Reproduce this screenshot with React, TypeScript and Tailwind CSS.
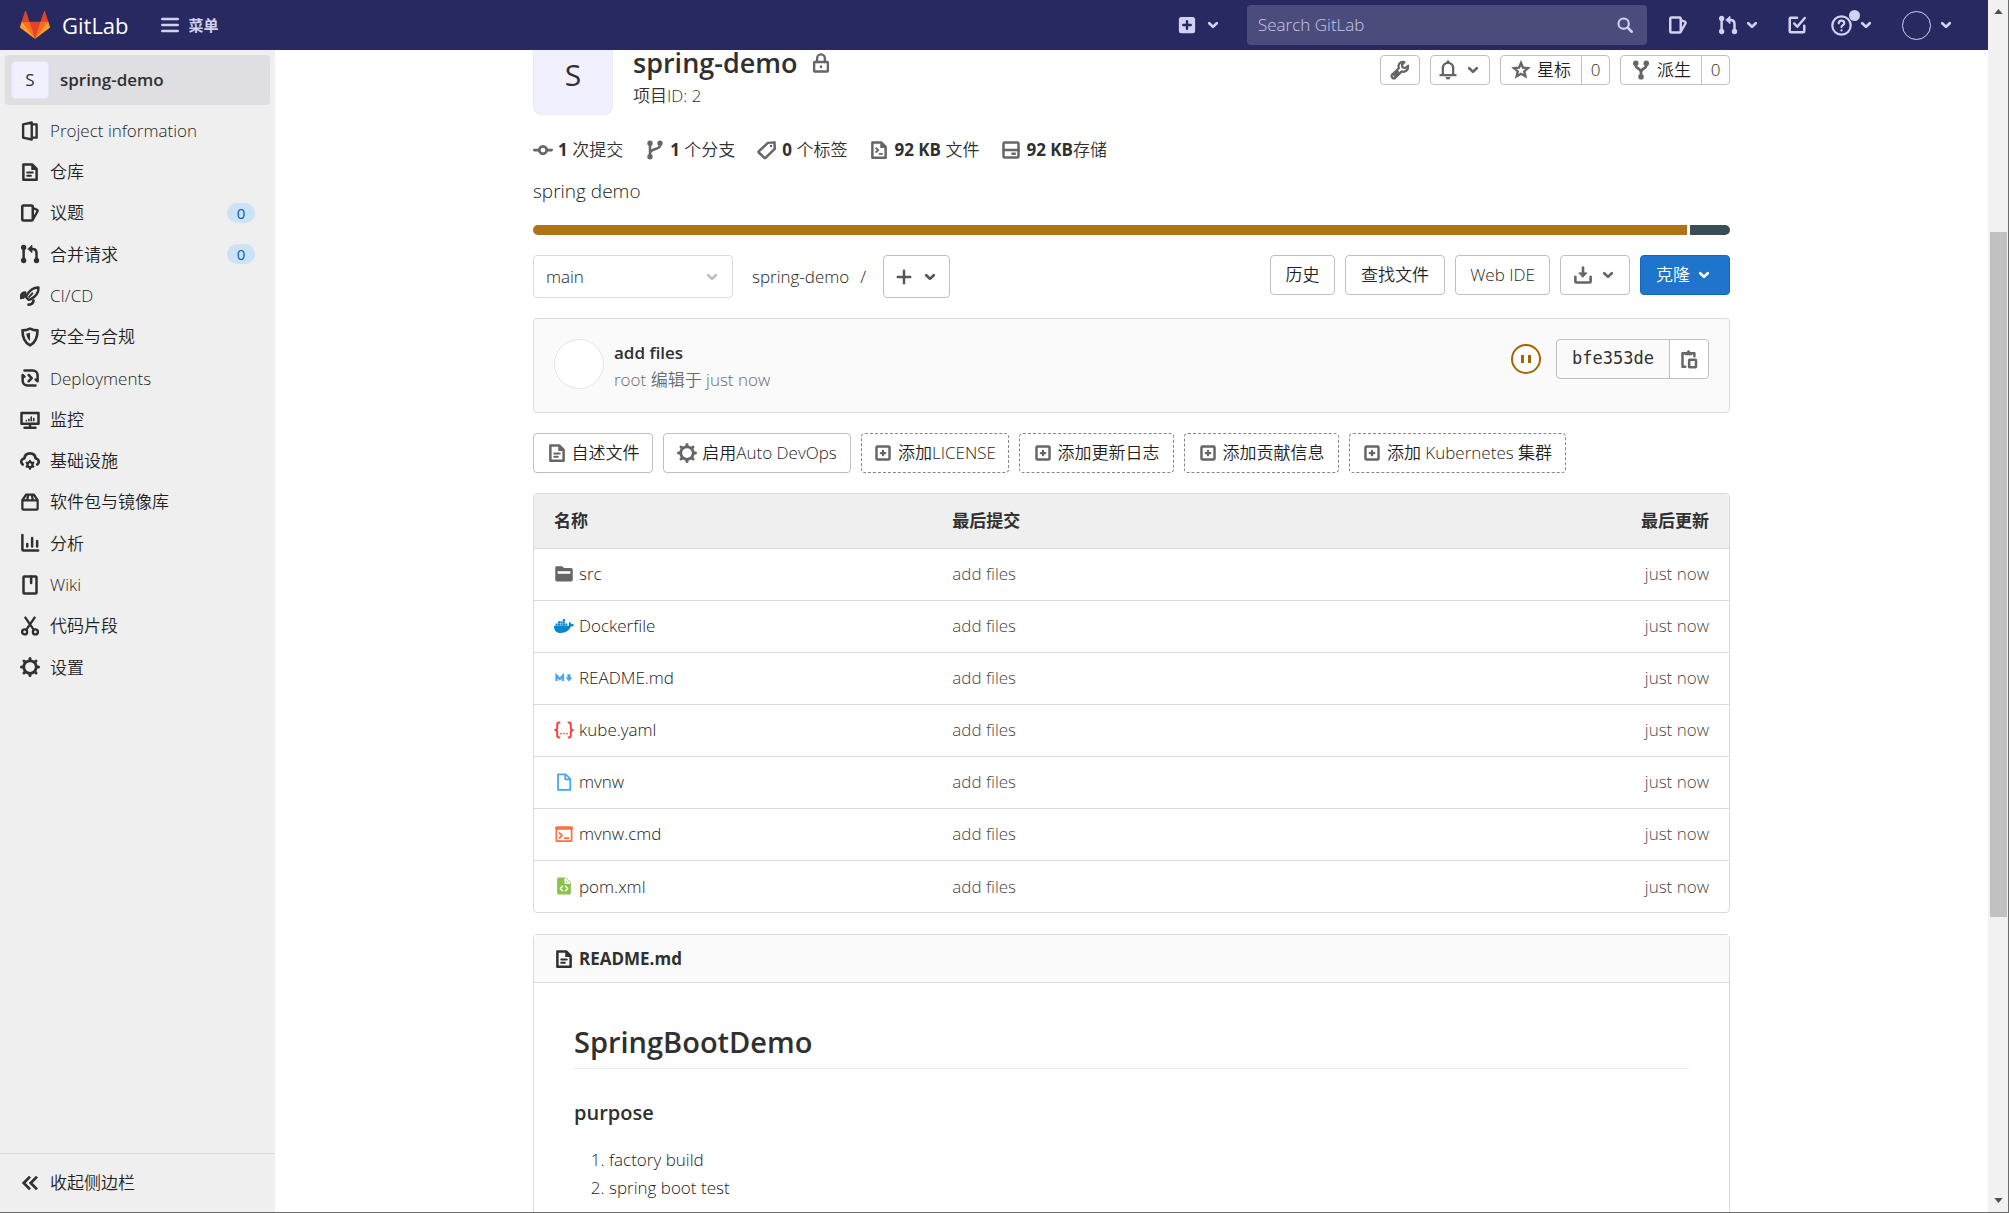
import React from "react";
import { FaDocker } from "react-icons/fa";

type IconProps = { className?: string };

function Svg({ className = "size-5", children }: IconProps & { children: React.ReactNode }) {
  return (
    <svg
      viewBox="0 0 16 16"
      className={`shrink-0 ${className}`}
      fill="none"
      stroke="currentColor"
      strokeWidth="1.9"
      strokeLinecap="round"
      strokeLinejoin="round"
      aria-hidden="true"
    >
      {children}
    </svg>
  );
}

const Chevron = ({ className = "size-5" }: IconProps) => (
  <Svg className={className}>
    <path d="M5 6.600 8 9.500l3-2.900" strokeWidth="2.200" />
  </Svg>
);
const Info = () => (
  <Svg>
    <path d="M2.500 2.700 9.400 1.200v13.600L2.500 13.300zM9.600 2.700h3.700v10.600H9.600" />
  </Svg>
);
const Doc = ({ className }: IconProps) => (
  <Svg className={className}>
    <path d="M2.700 1.900h7l3.600 3.600v8.600H2.700z" strokeWidth="2" />
    <path d="M9 1.600v4.700h4.700z" fill="currentColor" stroke="none" />
    <path d="M5.800 8.300h4.400M5.800 11h2.900" strokeWidth="1.600" />
  </Svg>
);
const Issues = ({ className }: IconProps) => (
  <Svg className={className}>
    <path d="M2.800 2h6.400c.6 0 1 .4 1 1v10c0 .6-.4 1-1 1H2.800c-.6 0-1-.4-1-1V3c0-.6.4-1 1-1z" strokeWidth="2" />
    <path d="m10.400 4 3.300 1.500c.4.200.6.600.4 1l-3.500 6.200" strokeWidth="1.800" />
  </Svg>
);
const Merge = ({ className }: IconProps) => (
  <Svg className={className}>
    <path d="M2.900 3v10M13.200 13V7.200c0-2-1.200-3.300-3.200-3.300H8.400" strokeWidth="2" />
    <path d="M6.400 3.800 9.600.9v5.800z" fill="currentColor" strokeWidth=".6" />
    <circle cx="2.900" cy="2.800" r="1.200" fill="currentColor" />
    <circle cx="2.900" cy="13.200" r="1.200" fill="currentColor" />
    <circle cx="13.200" cy="13.200" r="1.200" fill="currentColor" />
  </Svg>
);
const Rocket = () => (
  <Svg>
    <path d="M14.800 1.200c-4-.2-6.600 1.300-9.500 6.400l-.4 1.400 2.100 2.100 1.400-.4C13.500 8 15 5.300 14.800 1.200z" />
    <path d="m7.300 8.700 2.600-2.800" strokeWidth="1.600" />
    <path d="M4.200 5.300C1.900 5.500.700 7.200.800 9.600M10.800 11.600c-.2 2.200-1.900 3.200-3.900 3.300M2.600 9.200 4 7.200" strokeWidth="2.200" />
  </Svg>
);
const Shield = () => (
  <Svg>
    <path d="M8 1.300c2 1 4 1.400 6 1.400 0 5.700-1.500 9.600-6 12-4.500-2.400-6-6.300-6-12 2 0 4-.4 6-1.400z" strokeWidth="2.100" />
    <path d="M8 4.400v6.800C6.200 9.800 5.200 7.800 5 5.200 6 5.100 7.200 4.900 8 4.400z" fill="currentColor" stroke="none" />
  </Svg>
);
const Deploy = () => (
  <Svg>
    <path d="M3.600 2h6.500c2.400 0 4 1.600 4 4v4.200M12.400 14H6.100c-2.400 0-4-1.600-4-4V5.800M14.100 10.600l-1.600-1.400M2.100 5.600l1.500 1.300" strokeWidth="2" />
    <path d="m6.900 5.600 2.500 2.500-2.500 2.500" strokeWidth="2" />
  </Svg>
);
const Monitor = () => (
  <Svg>
    <path d="M1.200 2.400h13.600v8.600H1.200zM8 11.500v2.400M3.600 14.200h8.800" strokeWidth="2" />
    <path d="M5.100 8.400v.2M7.100 7.400v1.200M9 5.600v3M11 6.800v1.800" strokeWidth="1.300" />
  </Svg>
);
const CloudGear = () => (
  <Svg>
    <path d="M2.200 10.800C.1 9 1 6.200 3.500 6 3.800 3.400 5.600 1.900 8 1.900s4.200 1.500 4.500 4.100c2.500.2 3.400 3 1.300 4.800" strokeWidth="2.100" />
    <circle cx="8" cy="10.900" r="2" strokeWidth="1.900" />
    <path d="M8 7.700v.8M8 13.300v1M5.200 9.300l.7.400M10.100 12.100l.7.400M5.200 12.500l.7-.4M10.100 9.700l.7-.4" strokeWidth="1.600" />
  </Svg>
);
const Package = () => (
  <Svg>
    <path d="M1.900 6.700h12.200v6.600c0 .5-.3.800-.8.800H2.700c-.5 0-.8-.3-.8-.8zM1.900 6.500 5 2h6l3.100 4.500M6.600 2.200l-.8 4M9.400 2.200l.8 4" strokeWidth="1.800" />
  </Svg>
);
const ChartIcon = () => (
  <Svg>
    <path d="M1.900 1.500v11.600c0 .5.300.8.800.8h11.800M5.800 8.800v2M9.700 4v6.800M13.700 6.300v4.500" strokeWidth="2" />
  </Svg>
);
const Book = () => (
  <Svg>
    <path d="M3.400 1.200h9.200c.4 0 .6.200.6.600v12.400c0 .4-.2.600-.6.600H3.400c-.4 0-.6-.2-.6-.6V1.800c0-.4.200-.6.600-.6z" strokeWidth="2" />
    <path d="M8.900 1.400v5" strokeWidth="2" />
  </Svg>
);
const Scissors = () => (
  <Svg>
    <circle cx="3.700" cy="12.700" r="2" />
    <circle cx="12.300" cy="12.700" r="2" />
    <path d="m4.300 1.300 6.600 9.600M11.700 1.300 5.100 10.900" strokeWidth="1.900" />
  </Svg>
);
const Gear = ({ className }: IconProps) => (
  <Svg className={className}>
    <circle cx="8" cy="8" r="5" strokeWidth="2.200" />
    <path d="M8 1.200v1.200M8 13.600v1.200M1.200 8h1.200M13.600 8h1.200M3.200 3.200l.8.800M12 12l.8.800M12.800 3.200l-.8.800M4 12l-.8.800" strokeWidth="2.400" />
  </Svg>
);
const DoubleLeft = () => (
  <Svg>
    <path d="M8 2.900 3 8l5 5.100M13.600 2.900l-5 5.100 5 5.100" strokeWidth="2.200" strokeLinecap="butt" strokeLinejoin="miter" />
  </Svg>
);
const PlusSquare = ({ className }: IconProps) => (
  <Svg className={className}>
    <rect x="2.200" y="2.200" width="11.600" height="11.600" rx="1" strokeWidth="2.200" />
    <path d="M8 6v4M6 8h4" strokeWidth="2" />
  </Svg>
);
const Lock = () => (
  <Svg className="size-5 text-[#666]">
    <rect x="2.500" y="7.200" width="11" height="7.600" rx=".4" />
    <path d="M4.900 7.200V4.300c0-1.800 1.300-3.200 3.100-3.200s3.100 1.400 3.100 3.200v2.900" />
    <path d="M8 10.800v.400" strokeWidth="1.900" />
  </Svg>
);
const Wrench = () => (
  <Svg>
    <path d="M14.400 4.600 12.300 6.400l-2.300-.5-.4-2.200 1.900-2C9.300 1 7.300 2.200 6.900 4.200c-.2.900 0 1.700.2 2.400l-5.300 5c-.7.700-.7 1.800 0 2.500s1.800.7 2.500 0l5.100-5c2.700 1.100 5.600-1.100 5-4.500zM3.600 12.300l2.800-2.800" strokeWidth="1.800" />
  </Svg>
);
const Bell = () => (
  <Svg>
    <path d="M3.900 11.600V6.400c0-2.500 1.700-4.100 4.100-4.100s4.100 1.600 4.100 4.100v5.200M2 12.100h12" strokeWidth="1.900" />
    <path d="M8 1.200v.6" strokeWidth="2.200" />
    <path d="M6 13.600h4c0 1.100-.8 2-2 2s-2-.9-2-2z" fill="currentColor" stroke="none" />
  </Svg>
);
const Star = () => (
  <Svg>
    <path d="m8 2.400 1.600 3.700 4 .4-3 2.600.9 3.900L8 11l-3.500 2 .9-3.900-3-2.600 4-.4z" strokeWidth="1.900" strokeLinejoin="miter" />
  </Svg>
);
const Fork = () => (
  <Svg>
    <path d="M3.800 3v1.500C3.800 6.800 8 6.900 8 9.500V13M12.200 3v1.500C12.200 6.800 8 6.900 8 9.500" strokeWidth="2.200" />
    <circle cx="3.800" cy="2.600" r="1.300" fill="currentColor" />
    <circle cx="12.200" cy="2.600" r="1.300" fill="currentColor" />
    <circle cx="8" cy="13.400" r="1.300" fill="currentColor" />
  </Svg>
);
const Commit = () => (
  <Svg>
    <circle cx="8" cy="8" r="3" strokeWidth="2.200" />
    <path d="M1.100 8h3.400M11.500 8h3.400" strokeWidth="2.200" />
  </Svg>
);
const Branch = () => (
  <Svg>
    <path d="M4 3v10M12 3v1.400c0 3.200-7.200 2.400-7.800 5.800" strokeWidth="2" />
    <circle cx="4" cy="2.600" r="1.200" fill="currentColor" />
    <circle cx="12" cy="2.600" r="1.200" fill="currentColor" />
    <circle cx="4" cy="13.400" r="1.200" fill="currentColor" />
  </Svg>
);
const Tag = () => (
  <Svg>
    <path d="M8.700 2.300 14 1.900l.2 5.200-7.200 7c-.4.400-.9.400-1.300 0L1.600 10.200c-.4-.4-.4-.9 0-1.300z" strokeWidth="2" />
    <circle cx="11.200" cy="4.800" r="1" fill="currentColor" stroke="none" />
  </Svg>
);
const DocCode = () => (
  <Svg>
    <path d="M2.700 1.900h7l3.600 3.600v8.600H2.700z" strokeWidth="2" />
    <path d="M9 1.600v4.700h4.700z" fill="currentColor" stroke="none" />
    <path d="m5.700 6.600 1.800 1.500-1.800 1.500M8.500 11.100h1.900" strokeWidth="1.500" />
  </Svg>
);
const Disk = () => (
  <Svg>
    <rect x="2" y="2" width="12" height="12" rx="1" strokeWidth="2" />
    <path d="M2 8h12M9.200 11h1.800" strokeWidth="2" />
  </Svg>
);
const Download = () => (
  <Svg>
    <path d="M1.900 9.500v3.700c0 .5.300.8.800.8h10.600c.5 0 .8-.3.800-.8V9.500M8 2v6" strokeWidth="2.100" />
    <path d="M4.900 6.300h6.200L8 9.700z" fill="currentColor" strokeWidth=".8" />
  </Svg>
);
const Paste = () => (
  <Svg>
    <path d="M5 14.100H2.800V3.300h9.500v2.500" strokeWidth="2" />
    <path d="M4.800 5V2.400h1.500c.2-1 .7-1.400 1.300-1.400s1.100.4 1.300 1.400h1.500V5z" fill="currentColor" stroke="none" />
    <rect x="8.100" y="8.500" width="5.500" height="6" rx=".4" strokeWidth="2" />
  </Svg>
);
const Search = () => (
  <Svg className="size-[18px]">
    <circle cx="6.800" cy="6.800" r="4.600" />
    <path d="m10.400 10.400 3.600 3.600" strokeWidth="2.200" />
  </Svg>
);
const Todo = () => (
  <Svg>
    <path d="M8 2.100H3c-.5 0-.8.300-.8.800v10c0 .5.300.8.800.8h10c.5 0 .8-.3.800-.8V8.500" strokeWidth="2" />
    <path d="m5.800 6.800 2.400 2.600 6-7" strokeWidth="2" />
  </Svg>
);
const Help = () => (
  <Svg className="size-[21px]">
    <circle cx="8" cy="8" r="7" strokeWidth="1.700" />
    <path d="M5.900 6.300c0-1.200.9-2 2.100-2s2.100.8 2.100 1.900c0 1.500-2.100 1.500-2.100 3M8 11.700v.1" strokeWidth="1.700" />
  </Svg>
);

const Tanuki = () => (
  <svg viewBox="0 0 36 36" className="size-[30px] shrink-0" aria-hidden="true">
    <path fill="#e24329" d="M2 14l9.380 9v-9l-4-12.280c-.205-.632-1.176-.632-1.380 0zM34 14l-9.380 9v-9l4-12.280c.205-.632 1.176-.632 1.380 0zM18 34.380 3 14h30z" />
    <path fill="#fc6d26" d="M18 34.380 11.380 14H2l4 11zM18 34.380 24.620 14H34l-4 11z" />
    <path fill="#fca326" d="M2 14 .1 20.160c-.18.565 0 1.200.5 1.560l17.420 12.660zM34 14l1.900 6.160c.18.565 0 1.200-.5 1.560L18 34.380z" />
  </svg>
);

const FolderIcon = () => (
  <Svg className="size-5 text-[#666]">
    <path d="M1 3.200C1 2.300 1.600 1.800 2.400 1.800h3.700c.5 0 .9.200 1.200.6l.6.800h5.700c.8 0 1.400.6 1.400 1.400v8c0 .8-.6 1.400-1.400 1.400H2.400c-.8 0-1.400-.6-1.400-1.400z" fill="currentColor" stroke="none" />
    <path d="M2.900 6.800h10.200" stroke="#fff" strokeWidth="2" strokeLinecap="butt" />
  </Svg>
);
const MarkdownIcon = () => (
  <Svg className="size-5 text-[#42a5f5]">
    <path d="M2 10.300V6l2.600 2.800L7.200 6v4.300" strokeWidth="1.800" strokeLinecap="butt" strokeLinejoin="miter" />
    <path d="M12 5v3" strokeWidth="2.400" strokeLinecap="butt" />
    <path d="M9.200 7.600h5.600L12 10.800z" fill="currentColor" stroke="none" />
  </Svg>
);
const YamlIcon = () => (
  <Svg className="size-5 text-[#f44336]">
    <path d="M4.300 2H4C3 2 2.600 2.500 2.600 3.400v2.900c0 1-.5 1.500-1.600 1.700 1.100.2 1.600.7 1.600 1.700v2.900c0 .9.400 1.400 1.400 1.400h.3M11.700 2h.3c1 0 1.400.5 1.400 1.400v2.900c0 1 .5 1.500 1.600 1.700-1.100.2-1.600.7-1.600 1.700v2.900c0 .9-.4 1.400-1.400 1.400h-.3" strokeWidth="1.600" />
    <path d="M5.600 10.800v.1M8 10.800v.1M10.400 10.800v.1" strokeWidth="1.300" />
  </Svg>
);
const FileIcon = () => (
  <Svg className="size-5 text-[#42a5f5]">
    <path d="M3.200 1.800h6.100l3.700 3.700v8.700H3.200zM9 2v3.800h3.800" strokeWidth="1.400" />
  </Svg>
);
const ConsoleIcon = () => (
  <Svg className="size-5 text-[#ff7043]">
    <path d="M1.900 2.400h12.200v11.200H1.900z" strokeWidth="1.400" />
    <path d="M1.900 3.500h12.200" strokeWidth="2.200" />
    <path d="m4.300 7.200 2.200 2-2.200 2M8.500 11.300h3" strokeWidth="1.400" />
  </Svg>
);
const XmlIcon = () => (
  <Svg className="size-5 text-[#8bc34a]">
    <path d="M3.800 1.100h5.700l4 4v8.400c0 .8-.5 1.300-1.300 1.300H3.800c-.8 0-1.300-.5-1.300-1.300V2.400c0-.8.5-1.300 1.300-1.300z" fill="currentColor" stroke="none" />
    <path d="M9 2.200v3.500h3.500zM6.800 8.200 5.100 10l1.700 1.800M9.200 8.200l1.700 1.800-1.700 1.800" stroke="#fff" strokeWidth="1.200" />
  </Svg>
);

const nav: { label: string; icon: React.ReactNode; count?: number }[] = [
  { label: "Project information", icon: <Info /> },
  { label: "仓库", icon: <Doc /> },
  { label: "议题", icon: <Issues />, count: 0 },
  { label: "合并请求", icon: <Merge />, count: 0 },
  { label: "CI/CD", icon: <Rocket /> },
  { label: "安全与合规", icon: <Shield /> },
  { label: "Deployments", icon: <Deploy /> },
  { label: "监控", icon: <Monitor /> },
  { label: "基础设施", icon: <CloudGear /> },
  { label: "软件包与镜像库", icon: <Package /> },
  { label: "分析", icon: <ChartIcon /> },
  { label: "Wiki", icon: <Book /> },
  { label: "代码片段", icon: <Scissors /> },
  { label: "设置", icon: <Gear /> },
];

const files: { name: string; icon: React.ReactNode }[] = [
  { name: "src", icon: <FolderIcon /> },
  { name: "Dockerfile", icon: <FaDocker className="size-5 shrink-0 text-[#0288d1]" aria-hidden="true" /> },
  { name: "README.md", icon: <MarkdownIcon /> },
  { name: "kube.yaml", icon: <YamlIcon /> },
  { name: "mvnw", icon: <FileIcon /> },
  { name: "mvnw.cmd", icon: <ConsoleIcon /> },
  { name: "pom.xml", icon: <XmlIcon /> },
];

const stats: { icon: React.ReactNode; value: string; label: string }[] = [
  { icon: <Commit />, value: "1", label: " 次提交" },
  { icon: <Branch />, value: "1", label: " 个分支" },
  { icon: <Tag />, value: "0", label: " 个标签" },
  { icon: <DocCode />, value: "92 KB", label: " 文件" },
  { icon: <Disk />, value: "92 KB", label: "存储" },
];

const suggestions = [
  { label: "添加LICENSE", width: "w-[148px]" },
  { label: "添加更新日志", width: "w-[155px]" },
  { label: "添加贡献信息", width: "w-[155px]" },
  { label: "添加 Kubernetes 集群", width: "w-[217px]" },
];

function TopBar() {
  return (
    <header className="relative z-10 flex h-[50px] shrink-0 items-center bg-[#292961] pr-8 pl-5 text-[#d1d1f0]">
      <a href="#" className="flex items-center gap-3 text-[22px] font-medium text-white">
        <Tanuki />
        GitLab
      </a>
      <button className="ml-[30px] flex items-center gap-2 text-[15px] font-semibold">
        <Svg className="size-[22px]">
          <path d="M2.400 3.600h11.200M2.400 8h11.200M2.400 12.400h11.200" />
        </Svg>
        菜单
      </button>
      <div className="ml-auto flex items-center">
        <button className="flex items-center gap-[6px]" aria-label="新建">
          <Svg>
            <rect x="1.500" y="1.500" width="13" height="13" rx="2" fill="currentColor" stroke="none" />
            <path d="M8 5v6M5 8h6" stroke="#292961" strokeWidth="1.900" />
          </Svg>
          <Chevron />
        </button>
        <label className="ml-6 flex h-10 w-[400px] items-center rounded bg-[#4c4c7c] pr-[13px] pl-[11px]">
          <input type="search" aria-label="Search GitLab" placeholder="Search GitLab" className="min-w-0 flex-1 bg-transparent text-[17px] outline-none placeholder:text-[#c8c8e8]" />
          <Search />
        </label>
        <a href="#" aria-label="议题" className="ml-[21px]"><Issues /></a>
        <button className="ml-[30px] flex items-center gap-1" aria-label="合并请求"><Merge /><Chevron /></button>
        <a href="#" aria-label="待办事项" className="ml-[25px]"><Todo /></a>
        <button className="relative ml-6 flex items-center gap-1" aria-label="帮助">
          <Help />
          <Chevron />
          <span className="absolute -top-[5px] left-[18px] size-[11px] rounded-full bg-[#d1d1f0]" />
        </button>
        <button className="ml-[26px] flex items-center gap-[5px]" aria-label="用户">
          <span className="size-[29px] rounded-full border border-[#d1d1f0]" />
          <Chevron />
        </button>
      </div>
    </header>
  );
}

function Sidebar() {
  return (
    <aside className="flex w-[275px] shrink-0 flex-col bg-[#efefef] text-[17px] text-[#1f1f1f] [&_svg]:text-[#303030]">
      <a href="#" className="mx-[5px] mt-[5px] flex h-[50px] items-center gap-[11px] rounded bg-[#dfdee3] px-[6px] font-semibold text-[#303030]">
        <span className="flex size-[38px] items-center justify-center rounded border border-[#e4e4f4] bg-[#f0f0ff] font-normal">S</span>
        spring-demo
      </a>
      <ul className="mt-[5px] grid h-[578px] auto-rows-fr">
        {nav.map((n) => (
          <li key={n.label} className="flex">
            <a href="#" className="flex flex-1 items-center gap-[10px] px-5">
              {n.icon}
              {n.label}
              {n.count !== undefined && (
                <span className="ml-auto flex h-5 w-7 items-center justify-center rounded-full bg-[#cbe2f9] text-[15px] font-normal text-[#0b5cad]">{n.count}</span>
              )}
            </a>
          </li>
        ))}
      </ul>
      <button className="mt-auto flex h-[59px] items-center gap-[10px] border-t border-[#dbdbdb] px-5">
        <DoubleLeft />
        收起侧边栏
      </button>
    </aside>
  );
}

const outline = "flex items-center justify-center rounded border border-[#bfbfbf] bg-white";

function ProjectHeader() {
  return (
    <div className="flex items-start">
      <span className="flex size-20 shrink-0 items-center justify-center rounded-lg border border-[#ebebf5] bg-[#f0f0ff] text-[30px] leading-none font-normal">S</span>
      <div className="ml-5">
        <h1 className="mt-[10px] flex items-center gap-[13px] text-[27px] leading-9 font-semibold">
          spring-demo
          <Lock />
        </h1>
        <p className="text-[17px] leading-[30px] text-[#303030]">项目ID: 2</p>
      </div>
      <div className="mt-5 ml-auto flex items-center gap-[10px] text-[17px] text-[#1f1f1f] [&_svg]:text-[#666]">
        <button className={`${outline} h-[30px] w-10`} aria-label="设置"><Wrench /></button>
        <button className={`${outline} h-[30px] w-[60px] gap-[5px]`} aria-label="通知"><Bell /><Chevron /></button>
        <div className={`${outline} h-[30px]`}>
          <button className="flex h-full w-20 items-center justify-center gap-[6px]"><Star />星标</button>
          <a href="#" className="flex h-full w-[28px] items-center justify-center border-l border-[#bfbfbf]">0</a>
        </div>
        <div className={`${outline} h-[30px]`}>
          <button className="flex h-full w-20 items-center justify-center gap-[6px]"><Fork />派生</button>
          <a href="#" className="flex h-full w-[28px] items-center justify-center border-l border-[#bfbfbf]">0</a>
        </div>
      </div>
    </div>
  );
}

function Toolbar() {
  return (
    <div className="mt-5 flex items-start text-[17px] text-[#1f1f1f]">
      <div className="relative">
        <select aria-label="分支" className="h-[43px] w-[200px] appearance-none rounded border border-[#dbdbdb] bg-white px-3 text-[17px] text-[#222]">
          <option>main</option>
        </select>
        <span className="pointer-events-none absolute top-3 right-[11px] text-[#bfbfbf]"><Chevron /></span>
      </div>
      <nav className="ml-[19px] flex h-[43px] items-center text-[17px] text-[#222]">
        <a href="#">spring-demo</a>
        <span className="mx-[11px]">/</span>
      </nav>
      <button className={`${outline} ml-[6px] h-[43px] w-[67px] gap-[6px] text-[#555]`} aria-label="添加">
        <Svg><path d="M8 3v10M3 8h10" strokeWidth="2" /></Svg>
        <Chevron />
      </button>
      <div className="ml-auto flex gap-[10px]">
        <button className={`${outline} h-10 w-[65px]`}>历史</button>
        <button className={`${outline} h-10 w-[100px]`}>查找文件</button>
        <button className={`${outline} h-10 w-[95px]`}>Web IDE</button>
        <button className={`${outline} h-10 w-[70px] gap-[5px] text-[#666]`} aria-label="下载"><Download /><Chevron /></button>
        <button className="flex h-10 w-[90px] items-center justify-center gap-1 rounded border border-[#1068bf] bg-[#1f75cb] text-white">
          克隆
          <Chevron />
        </button>
      </div>
    </div>
  );
}

function LastCommit() {
  return (
    <section className="mt-5 flex h-[95px] items-start rounded border border-[#dbdbdb] bg-[#fafafa] p-5">
      <span className="size-[50px] rounded-full border border-[#e5e5e5] bg-white" />
      <div className="ml-[10px] text-[17px] leading-[27px]">
        <a href="#" className="block font-semibold">add files</a>
        <p className="text-[#6b6b6b]">root 编辑于 just now</p>
      </div>
      <div className="ml-auto flex items-center gap-[15px]">
        <a href="#" aria-label="流水线已暂停" className="flex size-[30px] items-center justify-center gap-1 rounded-full border-2 border-[#ab6100] bg-white">
          <span className="h-2 w-[3px] bg-[#ab6100]" />
          <span className="h-2 w-[3px] bg-[#ab6100]" />
        </a>
        <div className="flex h-10 rounded border border-[#bfbfbf]">
          <span className="flex w-[112px] items-center justify-center font-['DejaVu_Sans_Mono',monospace] text-[17px]">bfe353de</span>
          <button className="flex w-[39px] items-center justify-center rounded-r border-l border-[#bfbfbf] bg-white text-[#666]" aria-label="复制"><Paste /></button>
        </div>
      </div>
    </section>
  );
}

function FileTable() {
  return (
    <div className="mt-5 rounded border border-[#dbdbdb]">
      <table className="w-full table-fixed text-[17px]">
        <thead>
          <tr className="h-[54px] border-b border-[#dbdbdb] bg-[#efefef] text-left">
            <th className="w-1/3 px-5 font-bold">名称</th>
            <th className="px-5 font-bold">最后提交</th>
            <th className="w-1/5 px-5 text-right font-bold">最后更新</th>
          </tr>
        </thead>
        <tbody>
          {files.map((f) => (
            <tr key={f.name} className="h-[52px] border-b border-[#dbdbdb] text-[#484848] last:border-b-0">
              <td className="px-5">
                <a href="#" className="flex items-center gap-[5px] text-[#222]">{f.icon}{f.name}</a>
              </td>
              <td className="px-5"><a href="#">add files</a></td>
              <td className="px-5 text-right">just now</td>
            </tr>
          ))}
        </tbody>
      </table>
    </div>
  );
}

function Readme() {
  return (
    <article className="mt-[21px] h-[400px] rounded-t border border-[#dbdbdb]">
      <div className="flex h-12 items-center gap-[5px] border-b border-[#dbdbdb] bg-[#fafafa] px-5 text-[17px] font-bold">
        <Doc />
        README.md
      </div>
      <div className="p-10">
        <h2 className="border-b border-[#eaeaea] pb-[7px] text-[29px] leading-[38px] font-semibold">SpringBootDemo</h2>
        <h3 className="mt-[30px] text-[20px] leading-7 font-semibold">purpose</h3>
        <ol className="mt-[19px] list-decimal pl-[35px] text-[17px] leading-7 text-[#222]">
          <li>factory build</li>
          <li>spring boot test</li>
        </ol>
      </div>
    </article>
  );
}

function ScrollBar() {
  return (
    <div className="flex w-[21px] shrink-0 flex-col items-center border-r border-[#6b6b6b] bg-[#f1f1f1] py-[9px]" aria-hidden="true">
      <svg viewBox="0 0 10 6" className="h-[5px] w-[9px]"><path d="M0 6 5 0l5 6z" fill="#505050" /></svg>
      <div className="mt-[218px] h-[685px] w-[17px] bg-[#c1c1c1]" />
      <svg viewBox="0 0 10 6" className="mt-auto h-[5px] w-[9px]"><path d="M0 0l5 6 5-6z" fill="#505050" /></svg>
    </div>
  );
}

export default function App() {
  return (
    <div className="flex h-screen border-b border-[#6b6b6b] bg-white font-['Open_Sans','Noto_Sans_CJK_SC',sans-serif] font-[350] text-[#303030]">
      <div className="flex min-w-0 flex-1 flex-col">
        <TopBar />
        <div className="flex min-h-0 flex-1">
          <Sidebar />
          <main className="min-w-0 flex-1 overflow-hidden">
            <div className="mx-auto -mt-[15px] max-w-[1237px] px-5">
              <ProjectHeader />
              <ul className="mt-5 flex h-[30px] items-center gap-[22px] text-[17px]">
                {stats.map((s, i) => (
                  <li key={i} className="flex items-center gap-[5px] [&_svg]:text-[#666]">
                    {s.icon}
                    <span className="whitespace-pre"><strong className="font-bold">{s.value}</strong>{s.label}</span>
                  </li>
                ))}
              </ul>
              <p className="mt-3 text-[19px] leading-7 text-[#222]">spring demo</p>
              <div className="mt-5 flex h-[10px] gap-[3px] overflow-hidden rounded-full">
                <span className="flex-1 bg-[#b07219]" />
                <span className="w-10 bg-[#384d54]" />
              </div>
              <Toolbar />
              <LastCommit />
              <div className="mt-5 flex gap-[10px] text-[17px] text-[#1f1f1f] [&_svg]:text-[#666]">
                <a href="#" className={`${outline} h-10 w-[120px] gap-[5px]`}><Doc />自述文件</a>
                <a href="#" className={`${outline} h-10 w-[188px] gap-[5px]`}><Gear />启用Auto DevOps</a>
                {suggestions.map((s) => (
                  <a key={s.label} href="#" className={`flex h-10 items-center justify-center gap-[6px] rounded border border-dashed border-[#868686] ${s.width}`}>
                    <PlusSquare className="size-[18px]" />
                    {s.label}
                  </a>
                ))}
              </div>
              <FileTable />
              <Readme />
            </div>
          </main>
        </div>
      </div>
      <ScrollBar />
    </div>
  );
}
